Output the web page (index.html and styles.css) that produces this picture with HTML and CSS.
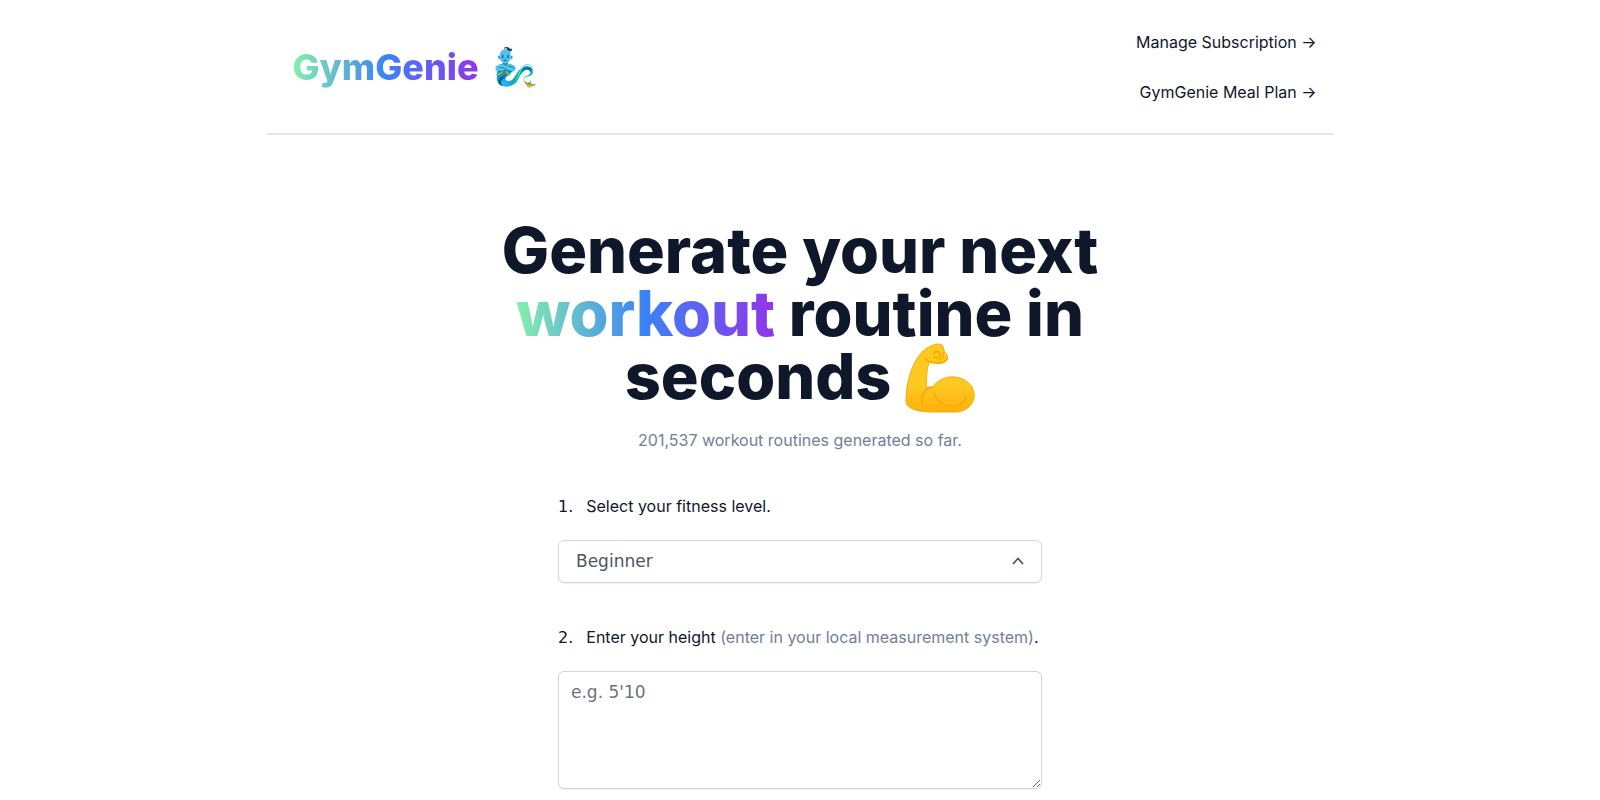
FILE: index.html
```html
<!DOCTYPE html>
<html lang="en">
<head>
    <meta charset="UTF-8">
    <meta name="viewport" content="width=device-width, initial-scale=1.0">
    <title>GymGenie</title>
    <link rel="stylesheet" href="styles.css">
</head>
<body>
    <div class="container">
        <header class="site-header">
            <a href="#" class="logo"><span class="gradient">GymGenie</span> <span class="genie">🧞‍♂️</span></a>
            <nav class="links">
                <a href="#">Manage Subscription →</a>
                <a href="#">GymGenie Meal Plan →</a>
            </nav>
        </header>

        <main class="content">
            <h1>
                Generate your next <span class="gradient">workout</span> routine in seconds
                <!-- Flexed arm -->
                <svg class="arm" viewBox="0 0 70 70" role="img" aria-label="flexed arm">
                    <defs>
                        <linearGradient id="skin" x1="0" y1="0" x2="0" y2="1">
                            <stop offset="0.6" stop-color="#ffc924"/>
                            <stop offset="1" stop-color="#ffb00d"/>
                        </linearGradient>
                    </defs>
                    <path d="M1 58C1 40 7 15 22 5Q32-1 37 2Q39 4 39 8Q44 13 42 17Q39 21 30 20L25 19C21 24 22 35 21 44H28C36 31 58 30 67 44C74 57 63 69 51 69H27C14 69 1 66 1 58Z" fill="url(#skin)" stroke="#f6ac0a" stroke-width="1"/>
                    <path d="M20 15Q23 20 32 20Q40 21 42 15M28 11Q30 7 34 9Q37 13 32 15L29 14M38 10Q39 15 34 17M28 44Q15 47 17 60M29 50C34 67 57 67 61 54" fill="none" stroke="#f8ab00" stroke-width="1.6" stroke-linecap="round"/>
                </svg>
            </h1>
            <p class="count">201,537 workout routines generated so far.</p>

            <form class="workout-form">
                <!-- 1. Fitness level -->
                <div class="step">
                    <span class="number">1.</span>
                    <label for="level">Select your fitness level.</label>
                </div>
                <div class="select-wrap">
                    <select id="level">
                        <option>Beginner</option>
                        <option>Intermediate</option>
                        <option>Advanced</option>
                    </select>
                    <svg class="chevron" viewBox="0 0 20 20" aria-hidden="true">
                        <path d="M5 13L10 7.5L15 13" fill="none" stroke="#4b5563" stroke-width="1.8"/>
                    </svg>
                </div>

                <!-- 2. Height -->
                <div class="step">
                    <span class="number">2.</span>
                    <label for="height">Enter your height <span class="hint">(enter in your local measurement system)</span>.</label>
                </div>
                <textarea id="height" rows="4" placeholder="e.g. 5'10"></textarea>
            </form>
        </main>
    </div>
</body>
</html>
```
FILE: styles.css
```css
* {
    box-sizing: border-box;
}
body {
    margin: 0;
    font-family: Inter, sans-serif;
    font-size: 16px;
    line-height: 25px;
    color: #0f172a;
    background: white;
}
a {
    color: inherit;
    text-decoration: none;
}
.container {
    max-width: 1067px;
    margin: 0 auto;
}
.gradient {
    background: linear-gradient(to right, #86efac, #3b82f6, #9333ea);
    -webkit-background-clip: text;
    background-clip: text;
    color: transparent;
}

/* Header */
.site-header {
    display: flex;
    justify-content: space-between;
    align-items: center;
    padding: 17px 17px 16px 26px;
    border-bottom: 2px solid #e5e7eb;
}
.logo {
    display: flex;
    gap: 13px;
    font-size: 36px;
    line-height: 42px;
    font-weight: 800;
}
.genie {
    font-size: 37px;
}
.links {
    display: flex;
    flex-direction: column;
    line-height: 26px;
    text-align: right;
}
.links a {
    padding: 12px 0;
}

/* Title */
.content {
    display: flex;
    flex-direction: column;
    align-items: center;
    padding: 84px 17px 40px;
}
h1 {
    max-width: 738px;
    margin: 0;
    font-size: 63px;
    line-height: 63px;
    font-weight: 800;
    text-align: center;
}
.arm {
    width: 70px;
    height: 70px;
    margin: -12px 0 -4px;
    vertical-align: middle;
}
.count {
    margin: 19px 0 0;
    color: #718096;
}

/* Form */
.workout-form {
    width: 484px;
    max-width: 100%;
    margin-top: 41px;
}
.step {
    display: flex;
    gap: 13px;
    margin-bottom: 21px;
}
.number {
    font-family: "DejaVu Sans", sans-serif;
}
.hint {
    color: #718096;
}
.select-wrap {
    display: grid;
    align-items: center;
    margin-bottom: 42px;
}
.select-wrap select,
.chevron {
    grid-area: 1 / 1;
}
select,
textarea {
    display: block;
    width: 100%;
    border: 1px solid #d1d5db;
    border-radius: 6px;
    background: white;
    box-shadow: 0 1px 2px rgba(0, 0, 0, 0.05);
    font-family: "DejaVu Sans", sans-serif;
    font-size: 17px;
    line-height: 25px;
}
select {
    appearance: none;
    padding: 8px 17px;
    color: #4b5563;
}
.chevron {
    justify-self: end;
    width: 20px;
    height: 20px;
    margin-right: 14px;
    pointer-events: none;
}
textarea {
    padding: 8px 12px;
}
textarea::placeholder {
    color: #6b7280;
}
```
